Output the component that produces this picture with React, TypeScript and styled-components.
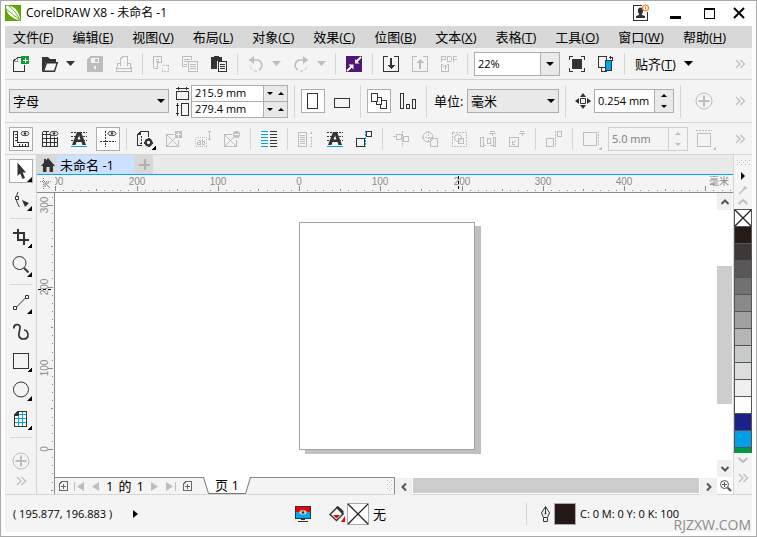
import React from "react";
import styled, { createGlobalStyle, css } from "styled-components";

const INK = "#333333";
const OFF = "#bdbdbd";
const LINE = "#d5d5d5";
const PANEL = "#f4f4f4";
const BLUE = "#00a8f3";

const Global = createGlobalStyle`
  * { box-sizing: border-box; }
  body { margin: 0; background: #fff; }
  button, input, select { font: inherit; color: inherit; margin: 0; border-radius: 0; outline: none; }
`;

const Window = styled.div`
  display: flex;
  flex-direction: column;
  position: relative;
  min-height: 100vh;
  padding: 0 4px 4px;
  border: 1px solid #a9a9a9;
  border-top-width: 0;
  box-shadow: inset 0 1px 0 #a9a9a9;
  font-family: "Open Sans", "Noto Sans CJK SC", sans-serif;
  font-size: 12px;
  line-height: 16px;
  color: #000;
`;

const TitleBar = styled.header`
  display: flex;
  align-items: center;
  height: 26px;
`;
const Title = styled.h1`
  flex: 1;
  margin: 0 0 0 5px;
  font-size: 12px;
  font-weight: 400;
`;
const WindowButton = styled.button`
  display: flex;
  align-items: center;
  justify-content: center;
  width: 34px;
  height: 24px;
  padding: 0;
  border: 0;
  background: none;
  &:last-child { width: 26px; }
`;

const MenuBar = styled.nav`
  display: flex;
  height: 22px;
  background: #d8d8d8;
  font-size: 13px;
`;
const MenuItem = styled.button`
  height: 22px;
  padding: 0 9px 0 10px;
  border: 0;
  background: none;
  line-height: 22px;
  white-space: nowrap;
  &:first-child { padding-left: 8px; }
`;

const Toolbar = styled.div<{ $tall?: boolean }>`
  display: flex;
  align-items: center;
  gap: 5px;
  height: ${(p) => (p.$tall ? 43 : 32)}px;
  padding: 0 7px 0 4px;
  border-bottom: 1px solid ${LINE};
  background: ${PANEL};
`;
const Divider = styled.span<{ $tall?: boolean }>`
  flex: none;
  width: 1px;
  height: ${(p) => (p.$tall ? 33 : 22)}px;
  margin: 0 1px;
  background: ${LINE};
`;
const ToolButton = styled.button<{ $on?: boolean; $off?: boolean }>`
  flex: none;
  display: flex;
  align-items: center;
  justify-content: center;
  width: 24px;
  height: 24px;
  padding: 0;
  border: 1px solid ${(p) => (p.$on ? "#adadad" : "transparent")};
  background: ${(p) => (p.$on ? "#fff" : "none")};
  color: ${(p) => (p.$off ? OFF : INK)};
`;
const ArrowButton = styled(ToolButton)`
  width: 16px;
  margin-left: -5px;
`;
const MoreButton = styled(ToolButton)`
  width: 10px;
  margin-left: auto;
`;
const AddButton = styled(ToolButton)`
  margin-left: 5px;
`;
const SnapButton = styled.button`
  display: flex;
  align-items: center;
  gap: 8px;
  padding: 0 4px;
  border: 0;
  background: none;
  font-size: 13px;
  white-space: nowrap;
`;

const Svg = styled.svg`
  display: block;
  flex: none;
  overflow: visible;
  fill: none;
  stroke: currentColor;
`;

const field = css`
  height: 24px;
  border: 1px solid #adadad;
`;
const SelectBox = styled.span<{ $width: number }>`
  position: relative;
  flex: none;
  width: ${(p) => p.$width}px;
  height: 24px;
  svg { position: absolute; right: 4px; top: 10px; pointer-events: none; }
`;
const Select = styled.select`
  ${field}
  appearance: none;
  width: 100%;
  padding: 0 3px;
  background: #e9e9e9;
  font-size: 13px;
`;
const Combo = styled.span`
  ${field}
  flex: none;
  display: flex;
  width: 86px;
  background: #fff;
`;
const ComboInput = styled.input`
  flex: 1;
  min-width: 0;
  padding: 0 3px;
  border: 0;
  background: none;
  font-size: 11px;
`;
const ComboArrow = styled.button`
  display: flex;
  align-items: center;
  justify-content: center;
  width: 19px;
  padding: 0;
  border: 0;
  border-left: 1px solid #adadad;
  background: #e9e9e9;
`;
const SpinBox = styled.span<{ $off?: boolean }>`
  ${field}
  flex: none;
  display: flex;
  width: 80px;
  border-color: ${(p) => (p.$off ? "#cfcfcf" : "#adadad")};
  background: ${(p) => (p.$off ? PANEL : "#fff")};
  color: ${(p) => (p.$off ? "#7a7a7a" : "#000")};
`;
const SpinButtons = styled.span<{ $off?: boolean }>`
  display: flex;
  flex-direction: column;
  width: 19px;
  border-left: 1px solid ${(p) => (p.$off ? "#cfcfcf" : "#adadad")};
  background: ${(p) => (p.$off ? PANEL : "#e9e9e9")};
  color: ${(p) => (p.$off ? OFF : "#000")};
`;
const SpinButton = styled.button`
  flex: 1;
  display: flex;
  align-items: center;
  justify-content: center;
  padding: 0;
  border: 0;
  background: none;
`;
const SizeGrid = styled.div`
  display: grid;
  grid-template-columns: 15px 97px;
  align-items: center;
  margin-left: 2px;
  color: ${INK};
`;
const SizeRow = styled.span`
  display: flex;
  height: 17px;
  border: 1px solid #adadad;
  background: #fff;
  color: #000;
  & + svg + & { margin-top: -1px; }
`;
const SizeButtons = styled.span`
  display: flex;
  width: 24px;
  border-left: 1px solid #adadad;
  background: #e9e9e9;
`;
const FieldLabel = styled.label`
  display: flex;
  align-items: center;
  width: 28px;
  margin-left: 1px;
  font-size: 13px;
  white-space: nowrap;
`;
const Nudge = styled.label`
  display: flex;
  align-items: center;
  gap: 3px;
  margin-left: 3px;
  color: ${INK};
`;

const Workspace = styled.main`
  flex: 1;
  display: grid;
  grid-template-columns: 32px minmax(0, 1fr) 19px;
  border-bottom: 1px solid ${LINE};
`;
const Toolbox = styled.aside`
  display: flex;
  flex-direction: column;
  gap: 5px;
  padding: 4px 3px 0 4px;
  border-right: 1px solid ${LINE};
  background: ${PANEL};
`;
const Rule = styled.span`
  height: 1px;
  margin: 1px;
  background: ${LINE};
`;
const ToolboxFoot = styled.div`
  display: flex;
  flex-direction: column;
  align-items: center;
  margin-top: 5px;
`;
const SlimButton = styled(ToolButton)`
  height: 16px;
`;

const Desk = styled.section`
  display: grid;
  grid-template-rows: 20px 18px minmax(0, 1fr) 17px;
  grid-template-columns: 18px minmax(0, 1fr) 16px;
`;
const Tabs = styled.div`
  grid-column: 1 / -1;
  display: flex;
  border-bottom: 1px solid ${BLUE};
  background: #e9e9e9;
`;
const Tab = styled.button<{ $active?: boolean; $width: number }>`
  display: flex;
  align-items: center;
  justify-content: ${(p) => (p.$active ? "flex-start" : "center")};
  width: ${(p) => p.$width}px;
  padding: 0 0 0 ${(p) => (p.$active ? 3 : 2)}px;
  border: 0;
  background: ${(p) => (p.$active ? "#cce1ff" : "#d8d8d8")};
  color: ${INK};
  font-size: 13px;
  & > span { color: #000; }
`;
const Corner = styled.div`
  background: ${PANEL};
  border-bottom: 1px solid #8a8a8a;
  padding: 3px;
  color: #8a8a8a;
`;
const TopRuler = styled.div`
  grid-column: 2 / -1;
  border-bottom: 1px solid #8a8a8a;
  background: ${PANEL};
`;
const SideRuler = styled.div`
  grid-row: 3 / 5;
  border-right: 1px solid #8a8a8a;
  background: ${PANEL};
`;
const RulerSvg = styled.svg`
  display: block;
  width: 100%;
  height: 100%;
  overflow: hidden;
  shape-rendering: crispEdges;
  font-family: "Liberation Sans", "Noto Sans CJK SC", sans-serif;
  font-size: 10px;
  fill: #8a8a8a;
`;
const Canvas = styled.div`
  position: relative;
  overflow: hidden;
  background: #fff;
`;
const Sheet = styled.div`
  position: absolute;
  left: 244px;
  top: 29px;
  width: 176px;
  height: 228px;
  border: 1px solid #a3a3a3;
  background: #fff;
  box-shadow: 6px 4px 0 #c0c0c0;
`;
const ScrollY = styled.div`
  display: flex;
  flex-direction: column;
  width: 15px;
`;
const ScrollButton = styled.button`
  flex: none;
  display: flex;
  align-items: center;
  justify-content: center;
  width: 17px;
  height: 17px;
  padding: 0;
  border: 0;
  background: #f0f0f0;
  color: #555;
  ${ScrollY} & { width: 15px; }
`;
const Track = styled.div`
  flex: 1;
  display: flex;
  flex-direction: column;
  padding: 56px 0;
`;
const Thumb = styled.div`
  flex: 1;
  background: #cdcdcd;
`;
const BottomRow = styled.div`
  display: flex;
  border-top: 1px solid transparent;
`;
const Pager = styled.div`
  flex: none;
  display: flex;
  align-items: center;
  width: 340px;
  margin-top: -1px;
  padding-right: 2px;
  border-top: 1px solid #8a8a8a;
  border-right: 1px solid #8a8a8a;
  background: ${PANEL};
`;
const PagerButton = styled.button<{ $off?: boolean }>`
  flex: none;
  display: flex;
  align-items: center;
  justify-content: center;
  width: 16px;
  height: 16px;
  padding: 0;
  border: 0;
  background: none;
  color: ${(p) => (p.$off ? OFF : "#666")};
`;
const PageCount = styled.span`
  display: flex;
  justify-content: center;
  gap: 5px;
  width: 44px;
  font-size: 13px;
`;
const PageTab = styled.button`
  display: grid;
  width: 48px;
  height: 16px;
  margin-left: 8px;
  padding: 0;
  border: 0;
  background: none;
  font-size: 13px;
  & > * { grid-area: 1 / 1; }
  & > span { line-height: 15px; }
`;
const PagerGrip = styled.span`
  margin-left: auto;
  color: ${OFF};
`;
const ScrollX = styled.div`
  flex: 1;
  display: flex;
  gap: 1px;
`;
const HThumb = styled.div`
  flex: 1;
  height: 15px;
  background: #cdcdcd;
`;
const ZoomCorner = styled.button`
  display: flex;
  align-items: center;
  justify-content: center;
  padding: 0;
  border: 0;
  background: #fff;
  color: #555;
`;

const Palette = styled.aside`
  display: flex;
  flex-direction: column;
  align-items: center;
  border-left: 1px solid ${LINE};
  background: ${PANEL};
`;
const PaletteButton = styled.button<{ $ink: string }>`
  flex: none;
  display: flex;
  align-items: center;
  justify-content: center;
  width: 18px;
  height: 14px;
  padding: 0;
  border: 0;
  background: none;
  color: ${(p) => p.$ink};
`;
const PaletteHead = styled.div`
  height: 54px;
  flex: none;
`;
const PaletteFoot = styled.div`
  height: 41px;
  flex: none;
  display: flex;
  flex-direction: column;
  gap: 4px;
`;
const Swatches = styled.div`
  flex: 1 1 0;
  min-height: 0;
  overflow: hidden;
  width: 18px;
`;
const Swatch = styled.button<{ $color: string }>`
  display: block;
  width: 18px;
  height: 17px;
  padding: 0;
  border: 1px solid #555;
  border-bottom: 0;
  background: ${(p) => p.$color};
`;

const StatusBar = styled.footer`
  display: flex;
  align-items: center;
  height: 37px;
  padding: 0 8px;
  background: ${PANEL};
  font-size: 11px;
  white-space: nowrap;
`;
const Coordinates = styled.output`
  width: 113px;
`;
const StatusButton = styled(ToolButton)<{ $gap?: number }>`
  width: 18px;
  margin-right: ${(p) => p.$gap ?? 0}px;
`;
const OutlineButton = styled(StatusButton)`
  margin-left: 8px;
`;
const ColorChip = styled.span<{ $color: string }>`
  display: block;
  width: 22px;
  height: 22px;
  margin-right: 4px;
  border: 1px solid #a9a9a9;
  background: ${(p) => p.$color};
`;
const FillText = styled.span`
  width: 152px;
  font-size: 13px;
`;
const Watermark = styled.span`
  position: absolute;
  right: 5px;
  bottom: 3px;
  color: #8c8c8c;
  font-size: 14px;
`;

type IconProps = { children: React.ReactNode; w?: number; h?: number; smooth?: boolean };
const Icon = ({ children, w = 16, h = 16, smooth }: IconProps) => (
  <Svg width={w} height={h} viewBox={`0 0 ${w} ${h}`} shapeRendering={smooth ? "auto" : "crispEdges"} aria-hidden="true">
    {children}
  </Svg>
);
const f = { fill: "currentColor", stroke: "none" } as const;

const Down = ({ w = 9, h = 5 }: { w?: number; h?: number }) => (
  <Icon w={w} h={h} smooth><path d={`M0 0H${w}L${w / 2} ${h}Z`} {...f} /></Icon>
);
const Up = () => <Icon w={6} h={3} smooth><path d="M0 3H6L3 0Z" {...f} /></Icon>;
const More = () => (
  <Icon w={10} h={10} smooth><path d="M1 1L5 5L1 9M5.500 1L9.500 5L5.500 9" strokeWidth="1.300" /></Icon>
);
const Plus = () => (
  <Icon w={18} h={18} smooth><circle cx="9" cy="9" r="8" /><path d="M9 3.500V14.500M3.500 9H14.500" strokeWidth="2" /></Icon>
);
const Fly = () => <path d="M21 16V21H16Z" fill="#000" stroke="none" />;
const Eye = () => (
  <g shapeRendering="auto"><ellipse cx="12" cy="2.500" rx="4" ry="2.200" strokeWidth=".9" /><circle cx="12" cy="2.500" r="1.300" {...f} /></g>
);

const icons: Record<string, React.ReactNode> = {
  new: <Icon><path d="M8 1.500H4.500L.5 5V15.500H11.500V9" /><path d="M.5 5H4.500V1.500" strokeOpacity=".5" /><path d="M8 0H16V8H8Z" fill="#0f9d3a" stroke="none" /><path d="M12 2V6.500M10 4H14.500" stroke="#fff" /></Icon>,
  open: <Icon smooth><path d="M0 15V1H6L8 3H14V6H4L1 16Z" {...f} /><path d="M4.500 6.800H15.300L12.500 15.200H1.500Z" fill="#f4f4f4" strokeWidth="1.400" /></Icon>,
  save: <Icon><path d="M3 0H16V16H0V3Z" {...f} /><path d="M4 2H12V7H4Z" fill="#f4f4f4" stroke="none" /><path d="M8 3H11V6H8Z" {...f} /><path d="M7 10H9V13H7Z" fill="#f4f4f4" stroke="none" /></Icon>,
  print: <Icon><path d="M4.500 10V3L7 .5H11.500V10M4.500 7.500H1.500L.5 15.500H15.500L14.500 7.500H11.500M1 12.500H15" /></Icon>,
  cut: <Icon><path d="M.5 12V.5H8.500V6.500H4.500V12.500H.5M3 3.500H6M3 5.500H6" /><path d="M10 9.500H16M15.500 9V15.500H9.500V12" strokeDasharray="2 1" /></Icon>,
  copy: <Icon><path d="M5 10.500H.5V.5H9.500V4M2 3.500H8M2 5.500H6M2 8.500H5" /><path d="M6.500 5.500H15.500V15.500H6.500ZM8 8.500H14M8 10.500H14M8 12.500H14" /></Icon>,
  paste: <Icon><path d="M0 1H3V0H8V1H11V5H6V13H0Z" {...f} /><path d="M7.500 5.500H15.500V15.500H7.500ZM9 8.500H14M9 10.500H14M9 12.500H14" /></Icon>,
  undo: <Icon smooth><path d="M1 4H10A5.500 5.500 0 0 1 11 14" strokeWidth="1.500" /><path d="M6 0V8L1 4Z" {...f} /><path d="M9 15A6 6 0 0 1 2 9" strokeDasharray="3 2" /></Icon>,
  redo: <Icon smooth><path d="M15 4H6A5.500 5.500 0 0 0 5 14" strokeWidth="1.500" /><path d="M10 0V8L15 4Z" {...f} /><path d="M7 15A6 6 0 0 0 14 9" strokeDasharray="3 2" /></Icon>,
  search: <Icon smooth><path d="M0 0H16V16H0Z" fill="#50157a" stroke="none" /><path d="M15 1L10 6M1 15L6 10" stroke="#fff" strokeWidth="1.800" /><path d="M9 3V7.500H13.500ZM2.500 8.500H7.500V13.500Z" fill="#fff" stroke="none" /></Icon>,
  import: <Icon><path d="M5 .5H.5V15.500H15.500V.5H11" /><path d="M7 2H9V9H12L8 13L4 9H7Z" {...f} /></Icon>,
  export: <Icon><path d="M5 .5H.5V15.500H15.500V.5H11" /><path d="M7 13H9V7H12L8 3L4 7H7Z" {...f} /></Icon>,
  pdf: <Icon><path d="M.5 6V.5H4.500V3.500H.5M6.500 0V5.500H9.500L10.500 4V2L9.500 .5H6.500M12.500 6V.5H16M12.500 3.500H15.500" /><path d="M2 8.500H.5V15.500H7.500V8.500H6M4 14V9M2 11L4 9L6 11" /></Icon>,
  full: <Icon><path d="M3 3H13V13H3Z" {...f} /><path d="M.5 4V.5H4M12 .5H15.500V4M15.500 12V15.500H12M4 15.500H.5V12" /></Icon>,
  swap: <Icon><path d="M.5 .5H8.500V11.500H.5ZM3.500 11V15.500H9" /><path d="M7.500 4.500H13.500V14.500H7.500Z" fill={BLUE} /><path d="M10.500 1.500H14.500V5M12 0V3" /></Icon>,
  pageW: <Icon w={13} h={13}><path d="M.5 4.500H12.500V12.500H.5ZM0 1.500H13M2.500 0V3M10.500 0V3" /></Icon>,
  pageH: <Icon w={13} h={13}><path d="M5.500 .5H12.500V12.500H5.500ZM1.500 0V13M0 2.500H3M0 10.500H3" /></Icon>,
  portrait: <Icon><path d="M2.500 .5H12.500V15.500H2.500Z" /></Icon>,
  landscape: <Icon><path d="M.5 5.500H15.500V14.500H.5Z" /></Icon>,
  allPages: <Icon><path d="M.5 .5H6.500V8.500H.5ZM6.500 4.500H10.500V11.500H5.500V8.500M10.500 7.500H15.500V15.500H9.500V11.500" /></Icon>,
  bars: <Icon><path d="M.5 .5H3.500V15.500H.5ZM6.500 11.500H9.500V15.500H6.500ZM12.500 6.500H15.500V15.500H12.500Z" /></Icon>,
  nudge: <Icon smooth><path d="M5.500 5.500H10.500V10.500H5.500Z" /><path d="M8 0L11 4H5ZM8 16L5 12H11ZM0 8L4 5V11ZM16 8L12 11V5Z" {...f} /></Icon>,
  rulers: <Icon><path d="M.5 .5H4.500V11.500H15.500V15.500H.5ZM2 3.500H4M2 6.500H4M2 9.500H4M6.500 13V15M9.500 13V15M12.500 13V15" /><Eye /></Icon>,
  grid: <Icon><path d="M.5 .5V15.500H15.500V6M4.500 0V16M8.500 4V16M12.500 6V16M0 3.500H8M0 7.500H16M0 11.500H16M.5 .5H7" /><Eye /></Icon>,
  baseline: <Icon><path d="M0 1.500H16M0 5.500H16M0 9.500H16" strokeDasharray="2 1" /><path d="M1 14L6 1H10L15 14H11.500L10.500 11H5.500L4.500 14ZM6.500 8.500H9.500L8 4Z" fillRule="evenodd" {...f} shapeRendering="auto" /><path d="M0 15.500H16" stroke={BLUE} /></Icon>,
  guides: <Icon><path d="M5.500 0V16M0 10.500H16" strokeDasharray="2 1" /><Eye /></Icon>,
  options: <Icon w={20} h={20}><path d="M7 16.500H2.500V6L6 2.500H13.500V8" /><path d="M2 6L6 2V6Z" {...f} /><path d="M6.500 7V16M5 14.500H8" strokeDasharray="2 1" /><circle cx="13.500" cy="13.500" r="2.800" strokeWidth="2.200" shapeRendering="auto" /><path d="M13.500 9V11M13.500 16V18M9 13.500H11M16 13.500H18" strokeWidth="2" /><Fly /></Icon>,
  boxPlus: <Icon><path d="M8 3.500H.5V15.500H12.500V9M1 4L12 15M12 4L1 15" /><path d="M9 0H16V7H9Z" {...f} /><path d="M12.500 1V6M10 3.500H15" stroke="#fff" /></Icon>,
  textFrame: <Icon><path d="M.5 6.500H11.500V15.500H.5Z" strokeDasharray="1 1" /><path d="M3 9.500H5V13.500H2.500V11.500H5M7.500 8V13.500H9.500V10.500H8M13 .5H16M14.500 0V8M13 8.500H16" /></Icon>,
  boxMinus: <Icon><path d="M8 3.500H.5V15.500H12.500V9M1 4L12 15M12 4L1 15" /><circle cx="12.500" cy="3.500" r="3.500" {...f} shapeRendering="auto" /><path d="M10 3.500H15" stroke="#fff" /></Icon>,
  columns: <Icon><path d="M0 .5H7M0 3.500H7M0 6.500H7M0 9.500H7M0 12.500H7M0 15.500H7" stroke={BLUE} /><path d="M9 .5H16M9 3.500H16M9 6.500H16M9 9.500H16M9 12.500H16M9 15.500H16" /></Icon>,
  column: <Icon><path d="M.5 1.500H8.500V15.500H.5ZM2 4.500H7M2 6.500H7M2 8.500H7M2 10.500H7M2 12.500H7" /><path d="M13.500 6V16M12 15.500H15M12 2.500H15M13.500 1V4M12 6.500H15" strokeDasharray="2 1" /></Icon>,
  snapObj: <Icon><path d="M.5 7.500H8.500V15.500H.5ZM10.500 .5H15.500V5.500H10.500Z" /><path d="M9.500 0V16" stroke={BLUE} strokeDasharray="2 1" /></Icon>,
  align1: <Icon><path d="M3.500 3.500H8.500V8.500H3.500ZM10.500 5.500H15.500V10.500H10.500ZM0 5.500H3" /><path d="M9.500 0V16" strokeDasharray="2 1" /></Icon>,
  align2: <Icon><circle cx="6" cy="6" r="5" shapeRendering="auto" /><path d="M8.500 7.500H15.500V15.500H8.500Z" /><path d="M6.500 0V12M0 6.500H12" strokeDasharray="2 1" /></Icon>,
  align3: <Icon><path d="M1.500 1.500H15.500V15.500H1.500Z" strokeDasharray="2 1" /><path d="M7.500 7.500H12.500V12.500H7.500Z" /><circle cx="7" cy="7" r="3.500" shapeRendering="auto" /></Icon>,
  align4: <Icon><path d="M.5 6.500H3.500V15.500H.5ZM7.500 7.500H10.500V12.500H7.500ZM13.500 6.500H15.500V15.500H13.500ZM4 14.500H6M10 14.500H13M9 2.500H16M10 .5H15M12.500 3V5" /></Icon>,
  align5: <Icon><path d="M.5 6.500H9.500V15.500H.5ZM3 13L7 9M3.500 10V13.500H6M10 2.500H16M11 .5H15M13.500 3V5" /></Icon>,
  align6: <Icon><path d="M.5 7.500H7.500V15.500H.5ZM11.500 .5H15.500V5.500H11.500Z" /><path d="M9.500 0V16" strokeDasharray="2 1" /></Icon>,
  offset: <Icon w={20} h={20}><path d="M2.500 3.500H15.500V16.500H2.500Z" /><path d="M17.500 2V16" strokeDasharray="2 1" /><path d="M21 17V21H17Z" {...f} /></Icon>,
  offset2: <Icon w={20} h={20}><path d="M2.500 4.500H15.500V17.500H2.500Z" /><path d="M1 1.500H17" strokeDasharray="2 1" /><path d="M21 17V21H17Z" {...f} /></Icon>,
  pick: <Icon w={20} h={20} smooth><path d="M6.500 1.500V15L9.200 12.500L11.500 18L14 17L11.700 11.500H15Z" {...f} /><Fly /></Icon>,
  shape: <Icon w={20} h={20} smooth><path d="M7 2C4.500 7 5 12 8.500 17" /><path d="M4.500 6.500H7.500V9.500H4.500Z" fill="#fff" /><path d="M11 10L18 13L14 17Z" {...f} /><Fly /></Icon>,
  crop: <Icon w={20} h={20}><path d="M2 6H13V18M7 2V13H18" strokeWidth="2" /><Fly /></Icon>,
  zoom: <Icon w={20} h={20} smooth><circle cx="8.500" cy="7" r="6.500" /><path d="M13 12L17.500 16.500" strokeWidth="2" /><Fly /></Icon>,
  line: <Icon w={20} h={20} smooth><path d="M5 14.500L15 4.500" /><path d="M2.500 13.500H5.500V16.500H2.500ZM14.500 2.500H17.500V5.500H14.500Z" fill="#fff" /><Fly /></Icon>,
  curve: <Icon w={20} h={20} smooth><path d="M2.800 6.500C2.500 2 8.500 1 9 5C9.300 8 7.200 11 8 14C9 18 16 18 17 14C17.500 10.500 15.500 8 13 8" strokeWidth="1.700" /></Icon>,
  rect: <Icon w={20} h={20}><path d="M2.500 2.500H17.500V17.500H2.500Z" /><Fly /></Icon>,
  ellipse: <Icon w={20} h={20} smooth><circle cx="10" cy="9.500" r="7.500" /><Fly /></Icon>,
  mesh: <Icon w={20} h={20}><path d="M7 2.500H15.500V17.500H3.500V6Z" fill="#fff" /><path d="M7.500 7V17M11.500 3V17M7 5.500H15M4 9.500H15M4 13.500H15" stroke={BLUE} /><path d="M3 7L8 2V7Z" {...f} /><Fly /></Icon>,
};

const Tool = ({ name, label, on, off }: { name: string; label: string; on?: boolean; off?: boolean }) => (
  <ToolButton type="button" aria-label={label} $on={on} $off={off} disabled={off}>{icons[name]}</ToolButton>
);

const Spinner = ({ id, value, off, label }: { id: string; value: string; off?: boolean; label: string }) => (
  <SpinBox $off={off}>
    <ComboInput id={id} aria-label={label} defaultValue={value} disabled={off} />
    <SpinButtons $off={off}>
      <SpinButton type="button" aria-label={`${label} +`}><Up /></SpinButton>
      <SpinButton type="button" aria-label={`${label} -`}><Down w={6} h={3} /></SpinButton>
    </SpinButtons>
  </SpinBox>
);

const SizeField = ({ label, value }: { label: string; value: string }) => (
  <SizeRow>
    <ComboInput aria-label={label} defaultValue={value} />
    <SizeButtons>
      <SpinButton type="button" aria-label={`${label} -`}><Down w={6} h={3} /></SpinButton>
      <SpinButton type="button" aria-label={`${label} +`}><Up /></SpinButton>
    </SizeButtons>
  </SizeRow>
);

const menus = [["文件", "F"], ["编辑", "E"], ["视图", "V"], ["布局", "L"], ["对象", "C"], ["效果", "C"], ["位图", "B"], ["文本", "X"], ["表格", "T"], ["工具", "O"], ["窗口", "W"], ["帮助", "H"]];
const swatches = ["#251c17", "#3e3838", "#595757", "#727171", "#898989", "#9fa0a0", "#b5b5b6", "#c9caca", "#dcdddd", "#efefef", "#ffffff", "#1d2088", "#00a0e9", "#009944"];

const STEP = 81.25;
const range = (from: number, to: number) => Array.from({ length: to - from + 1 }, (_, i) => from + i);
const tickLength = (i: number) => (i % 10 === 0 ? 5 : i % 5 === 0 ? 2 : 1);

const HorizontalRuler = () => (
  <RulerSvg>
    {range(-30, 53).map((i) => (
      <rect key={i} x={Math.round(244 + (i * STEP) / 10)} y={16 - tickLength(i)} width="1" height={tickLength(i)} />
    ))}
    {range(-3, 4).map((i) => (
      <text key={i} x={Math.round(244 + i * STEP)} y="10" textAnchor="middle">{Math.abs(i) * 100}</text>
    ))}
    <text x="654" y="10">毫米</text>
    <path d="M403.500 1V16" stroke="#000" strokeDasharray="3 2" />
  </RulerSvg>
);
const VerticalRuler = () => (
  <RulerSvg>
    {range(-5, 31).map((i) => (
      <rect key={i} x={16 - tickLength(i)} y={Math.round(256 - (i * STEP) / 10)} width={tickLength(i)} height="1" />
    ))}
    {range(0, 3).map((i) => {
      const y = Math.round(256 - i * STEP);
      return <text key={i} x="11" y={y} textAnchor="middle" transform={`rotate(-90 11 ${y})`}>{i * 100}</text>;
    })}
    <path d="M1 96.500H16" stroke="#000" strokeDasharray="3 2" />
  </RulerSvg>
);

const Cross = ({ size }: { size: number }) => (
  <Icon w={size} h={size} smooth><path d={`M0 0L${size} ${size}M${size} 0L0 ${size}`} stroke="#222" strokeWidth="1.300" /></Icon>
);
const Chevron = ({ d }: { d: string }) => <Icon w={10} h={10} smooth><path d={d} strokeWidth="2" /></Icon>;
const AddPage = () => <Icon w={9} h={10}><path d="M3 .5H8.500V9.500H.5V3ZM4.500 3V8M2 5.500H7" /></Icon>;

export default function App() {
  return (
    <Window>
      <Global />
      <TitleBar>
        <Icon smooth>
          <path d="M0 0H16V16H0Z" fill="#5da50b" stroke="none" />
          <path d="M1 1C8 0 14 5 15.500 15.500C7 14 1 9 1 1Z" fill="#fff" stroke="none" />
          <path d="M4 1C8 4 12 9 15 15M1 4C5 7 10 11 15 15" stroke="#5da50b" strokeWidth=".9" />
        </Icon>
        <Title>CorelDRAW X8 - 未命名 -1</Title>
        <WindowButton type="button" aria-label="账户">
          <Icon smooth>
            <path d="M9 .5H.5V15.500H14.500V7" stroke={INK} shapeRendering="crispEdges" />
            <path d="M5 5A2.500 2.500 0 0 1 10 5V7L9 9V10L12 11V13H3V11L6 10V9L5 7Z" fill={INK} stroke="none" />
            <circle cx="12.500" cy="3" r="3" fill="#fff" stroke="#f47b20" strokeWidth="1.200" />
            <path d="M12.500 1.500V4.500" stroke="#f47b20" />
          </Icon>
        </WindowButton>
        <WindowButton type="button" aria-label="最小化"><Icon w={11} h={11}><path d="M0 8H11V11H0Z" {...f} /></Icon></WindowButton>
        <WindowButton type="button" aria-label="最大化"><Icon w={11} h={11}><path d="M.5 .5H10.500V10.500H.5ZM0 1.500H11" /></Icon></WindowButton>
        <WindowButton type="button" aria-label="关闭"><Icon w={12} h={12} smooth><path d="M1 1L11 11M11 1L1 11" strokeWidth="2" /></Icon></WindowButton>
      </TitleBar>

      <MenuBar>
        {menus.map(([name, key]) => <MenuItem key={name} type="button">{name}(<u>{key}</u>)</MenuItem>)}
      </MenuBar>

      <Toolbar>
        <Tool name="new" label="新建" />
        <Tool name="open" label="打开" />
        <ArrowButton type="button" aria-label="最近打开"><Down /></ArrowButton>
        <Tool name="save" label="保存" off />
        <Tool name="print" label="打印" off />
        <Divider />
        <Tool name="cut" label="剪切" off />
        <Tool name="copy" label="复制" off />
        <Tool name="paste" label="粘贴" />
        <Divider />
        <Tool name="undo" label="撤消" off />
        <ArrowButton type="button" aria-label="撤消列表" $off><Down /></ArrowButton>
        <Tool name="redo" label="重做" off />
        <ArrowButton type="button" aria-label="重做列表" $off><Down /></ArrowButton>
        <Divider />
        <Tool name="search" label="搜索内容" />
        <Divider />
        <Tool name="import" label="导入" />
        <Tool name="export" label="导出" off />
        <Tool name="pdf" label="发布为 PDF" off />
        <Divider />
        <Combo>
          <ComboInput aria-label="缩放级别" defaultValue="22%" />
          <ComboArrow type="button" aria-label="缩放列表"><Down w={8} h={4} /></ComboArrow>
        </Combo>
        <Tool name="full" label="全屏预览" />
        <Tool name="swap" label="显示" />
        <Divider />
        <SnapButton type="button"><span>贴齐(<u>T</u>)</span><Down /></SnapButton>
        <MoreButton type="button" aria-label="更多" $off><More /></MoreButton>
      </Toolbar>

      <Toolbar $tall>
        <SelectBox $width={160}>
          <Select aria-label="页面大小"><option>字母</option></Select>
          <Down w={8} h={4} />
        </SelectBox>
        <SizeGrid>
          {icons.pageW}<SizeField label="页面宽度" value="215.9 mm" />
          {icons.pageH}<SizeField label="页面高度" value="279.4 mm" />
        </SizeGrid>
        <Divider $tall />
        <Tool name="portrait" label="纵向" on />
        <Tool name="landscape" label="横向" />
        <Divider $tall />
        <Tool name="allPages" label="所有页面" on />
        <Tool name="bars" label="当前页面" />
        <Divider $tall />
        <FieldLabel htmlFor="units">单位:</FieldLabel>
        <SelectBox $width={92}>
          <Select id="units"><option>毫米</option></Select>
          <Down w={8} h={4} />
        </SelectBox>
        <Divider $tall />
        <Nudge htmlFor="nudge">{icons.nudge}<Spinner id="nudge" label="微调距离" value="0.254 mm" /></Nudge>
        <Divider $tall />
        <AddButton type="button" aria-label="快速自定义" $off><Plus /></AddButton>
        <MoreButton type="button" aria-label="更多" $off><More /></MoreButton>
      </Toolbar>

      <Toolbar>
        <Tool name="rulers" label="标尺" on />
        <Tool name="grid" label="文档网格" />
        <Tool name="baseline" label="基线网格" />
        <Tool name="guides" label="辅助线" on />
        <Divider />
        <Tool name="options" label="选项" />
        <Tool name="boxPlus" label="创建空图框" off />
        <Tool name="textFrame" label="文本框" off />
        <Tool name="boxMinus" label="移除图框" off />
        <Divider />
        <Tool name="columns" label="栏" />
        <Divider />
        <Tool name="column" label="文本列" off />
        <Tool name="baseline" label="贴齐基线" />
        <Tool name="snapObj" label="对齐辅助线" />
        <Divider />
        <Tool name="align1" label="对齐" off />
        <Tool name="align2" label="中心" off />
        <Tool name="align3" label="边缘" off />
        <Tool name="align4" label="间距" off />
        <Tool name="align5" label="尺寸" off />
        <Divider />
        <Tool name="align6" label="动态" off />
        <Divider />
        <Tool name="offset" label="边距" off />
        <Spinner id="margin" label="边距值" value="5.0 mm" off />
        <Tool name="offset2" label="上边距" off />
        <MoreButton type="button" aria-label="更多" $off><More /></MoreButton>
      </Toolbar>

      <Workspace>
        <Toolbox>
          <Tool name="pick" label="选择工具" on />
          <Tool name="shape" label="形状工具" />
          <Rule />
          <Tool name="crop" label="裁剪工具" />
          <Tool name="zoom" label="缩放工具" />
          <Rule />
          <Tool name="line" label="手绘工具" />
          <Tool name="curve" label="艺术笔工具" />
          <Tool name="rect" label="矩形工具" />
          <Tool name="ellipse" label="椭圆形工具" />
          <Tool name="mesh" label="网状填充" />
          <Rule />
          <ToolboxFoot>
            <ToolButton type="button" aria-label="快速自定义" $off><Plus /></ToolButton>
            <SlimButton type="button" aria-label="更多" $off><More /></SlimButton>
          </ToolboxFoot>
        </Toolbox>

        <Desk>
          <Tabs>
            <Tab type="button" aria-label="欢迎屏幕" $width={20}>
              <Icon w={14} h={14} smooth><path d="M7 0L14 8H12V14H8.500V9H5.500V14H2V8H0L3 4.500V1H5V2.500Z" {...f} /></Icon>
            </Tab>
            <Tab type="button" $active $width={77}><span>未命名 -1</span></Tab>
            <Tab type="button" aria-label="新标签" $width={19}>
              <Icon w={11} h={11}><path d="M5.500 0V11M0 5.500H11" stroke="#b0b0b0" strokeWidth="2" /></Icon>
            </Tab>
          </Tabs>
          <Corner>
            <Icon w={12} h={12} smooth><path d="M0 3.500H11M3.500 0V12" strokeDasharray="1 1" /><path d="M10 10L5 5M5 9V5H9" /></Icon>
          </Corner>
          <TopRuler><HorizontalRuler /></TopRuler>
          <SideRuler><VerticalRuler /></SideRuler>
          <Canvas><Sheet /></Canvas>
          <ScrollY>
            <ScrollButton type="button" aria-label="向上"><Chevron d="M1.500 7L5 3.500L8.500 7" /></ScrollButton>
            <Track><Thumb /></Track>
            <ScrollButton type="button" aria-label="向下"><Chevron d="M1.500 3L5 6.500L8.500 3" /></ScrollButton>
          </ScrollY>
          <BottomRow>
            <Pager>
              <PagerButton type="button" aria-label="在前添加页"><AddPage /></PagerButton>
              <PagerButton type="button" aria-label="首页" $off><Icon w={10} h={9} smooth><path d="M10 0V9L3 4.500ZM0 0H1V9H0Z" {...f} /></Icon></PagerButton>
              <PagerButton type="button" aria-label="上一页" $off><Icon w={8} h={9} smooth><path d="M8 0V9L1 4.500Z" {...f} /></Icon></PagerButton>
              <PageCount><span>1</span><span>的</span><span>1</span></PageCount>
              <PagerButton type="button" aria-label="下一页" $off><Icon w={8} h={9} smooth><path d="M0 0V9L7 4.500Z" {...f} /></Icon></PagerButton>
              <PagerButton type="button" aria-label="末页" $off><Icon w={10} h={9} smooth><path d="M0 0V9L7 4.500ZM9 0H10V9H9Z" {...f} /></Icon></PagerButton>
              <PagerButton type="button" aria-label="在后添加页"><AddPage /></PagerButton>
              <PageTab type="button">
                <Icon w={48} h={16} smooth><path d="M1 -1H47L42 15.500H6Z" fill="#fff" stroke="none" /><path d="M.5 -.5L5.500 15.500H42.500L47.500 -.5" stroke="#777" /></Icon>
                <span>页 1</span>
              </PageTab>
              <PagerGrip><Icon w={5} h={12}><path d="M.5 0V12M4.500 0V12" strokeDasharray="1 3" /><path d="M2.500 2V12" strokeDasharray="1 3" /></Icon></PagerGrip>
            </Pager>
            <ScrollX>
              <ScrollButton type="button" aria-label="向左"><Chevron d="M7 1.500L3.500 5L7 8.500" /></ScrollButton>
              <HThumb />
              <ScrollButton type="button" aria-label="向右"><Chevron d="M3 1.500L6.500 5L3 8.500" /></ScrollButton>
            </ScrollX>
          </BottomRow>
          <ZoomCorner type="button" aria-label="导航器">
            <Icon w={11} h={11} smooth><circle cx="4.500" cy="4.500" r="4" /><path d="M4.500 2V7M2 4.500H7" /><path d="M7.500 7.500L11 11" strokeWidth="2" /></Icon>
          </ZoomCorner>
        </Desk>

        <Palette>
          <PaletteHead>
            <PaletteButton type="button" aria-label="移动调色板" $ink={OFF}>
              <Icon w={13} h={5}><path d="M0 .5H13M0 4.500H13" strokeDasharray="1 3" /><path d="M2 2.500H13" strokeDasharray="1 3" /></Icon>
            </PaletteButton>
            <PaletteButton type="button" aria-label="调色板菜单" $ink="#000"><Icon w={4} h={8} smooth><path d="M0 0V8L4 4Z" {...f} /></Icon></PaletteButton>
            <PaletteButton type="button" aria-label="滴管" $ink={OFF}><Icon w={8} h={8} smooth><path d="M0 8L5 3" strokeWidth="1.500" /><path d="M4 2L6 0L8 2L6 4Z" {...f} /></Icon></PaletteButton>
            <PaletteButton type="button" aria-label="向上滚动" $ink={OFF}><Chevron d="M.5 5L5 1L9.500 5" /></PaletteButton>
          </PaletteHead>
          <Swatches>
            <Swatch type="button" aria-label="无" $color="#fff"><Cross size={16} /></Swatch>
            {swatches.map((c) => <Swatch key={c} type="button" aria-label={c} $color={c} />)}
          </Swatches>
          <PaletteFoot>
            <PaletteButton type="button" aria-label="向下滚动" $ink={OFF}><Chevron d="M.5 3L5 7L9.500 3" /></PaletteButton>
            <PaletteButton type="button" aria-label="展开" $ink={OFF}><More /></PaletteButton>
          </PaletteFoot>
        </Palette>
      </Workspace>

      <StatusBar>
        <Coordinates>( 195.877, 196.883 )</Coordinates>
        <StatusButton type="button" aria-label="状态选项" $gap={150}><Icon w={4} h={8} smooth><path d="M0 0V8L5 4Z" fill="#000" stroke="none" /></Icon></StatusButton>
        <StatusButton type="button" aria-label="颜色校样" $gap={16}>
          <Icon>
            <path d="M1 1H15V6H1Z" fill="#f00000" stroke="none" /><path d="M1 6H15V12H1Z" fill={BLUE} stroke="none" />
            <path d="M.5 .5H15.500V12.500H.5ZM3 15.500H13M6 13.500H10" />
            <ellipse cx="8" cy="6.500" rx="3.500" ry="2.300" fill="#ddd" stroke="#999" shapeRendering="auto" /><circle cx="8" cy="6.500" r="1.300" {...f} shapeRendering="auto" />
          </Icon>
        </StatusButton>
        <StatusButton type="button" aria-label="填充" $gap={1}>
          <Icon smooth><path d="M1 8.500L8 1.500L14 8L7.500 14.500Z" fill="#fff" strokeWidth="1.400" /><path d="M7 1L14.500 9V5L9 0Z" {...f} /><path d="M4 9H11L7.500 12.500ZM16 10V16H12Z" fill="#f00000" stroke="none" /></Icon>
        </StatusButton>
        <ColorChip $color="#fff"><Cross size={20} /></ColorChip>
        <FillText>无</FillText>
        <Divider />
        <OutlineButton type="button" aria-label="轮廓">
          <Icon w={9} h={16} smooth><path d="M4.500 .5L8.500 7L6.500 11.500H2.500L.5 7ZM4.500 1V7M2.500 12V15.500H6.500V12" /><circle cx="4.500" cy="7.500" r="1" {...f} /></Icon>
        </OutlineButton>
        <ColorChip $color="#231815" />
        <span>C: 0 M: 0 Y: 0 K: 100</span>
      </StatusBar>
      <Watermark>RJZXW.COM</Watermark>
    </Window>
  );
}
